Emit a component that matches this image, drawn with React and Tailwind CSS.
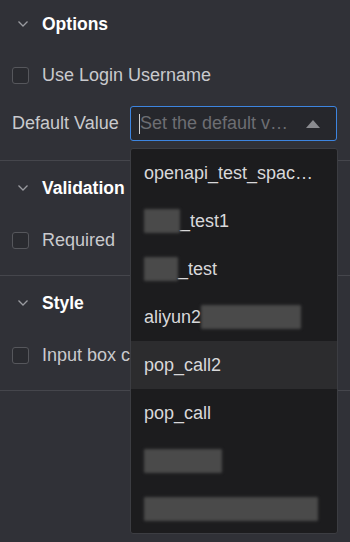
import React from 'react'

const font = { fontFamily: '"Liberation Sans", Arial, sans-serif' }

const Chevron = () => (
    <svg width="12" height="8" viewBox="0 0 12 8" className="shrink-0">
        <path d="M1.5 1.5 L6 6 L10.5 1.5" fill="none" stroke="#9a9ba0" strokeWidth="1.3" />
    </svg>
)

const Section = ({ title, children, first }) => (
    <div className={`border-b border-[#45464c] ${first ? '-mt-[3px]' : ''}`}>
        <div className="flex items-center h-[54px] pl-[17px] gap-[13px]">
            <Chevron />
            <span className="text-[17.5px] font-bold text-white">{title}</span>
        </div>
        {children}
    </div>
)

const Checkbox = ({ label, clip }) => (
    <div className="flex items-center h-[34px] pl-[12px] gap-[13px] mt-[8px]">
        <div className="w-[17px] h-[17px] rounded-[3px] border border-[#56575c] bg-[#2a2b30] shrink-0" />
        <span className={`text-[18px] text-[#c9cacd] whitespace-nowrap ${clip ? 'w-[88px] overflow-hidden' : ''}`}>{label}</span>
    </div>
)

const Blur = ({ w }) => (
    <span className={`inline-block h-[24px] ${w} bg-[#4a4a4a] blur-[1.5px] rounded-[1px]`} />
)

const items = [
    { text: 'openapi_test_spac…' },
    { pre: 'w-[36px]', text: '_test1' },
    { pre: 'w-[34px]', text: '_test' },
    { text: 'aliyun2', post: 'w-[100px]' },
    { text: 'pop_call2', hover: true },
    { text: 'pop_call' },
    { pre: 'w-[78px]', text: '' },
    { pre: 'w-[174px]', text: '' },
]

export default function App() {
    return (
        <div className="w-[350px] h-[542px] bg-[#303137] relative overflow-hidden" style={font}>
            <Section title="Options" first>
                <div className="-mt-[1px]">
                    <Checkbox label="Use Login Username" />
                </div>
                <div className="flex items-center h-[35px] pl-[12px] mt-[14px]">
                    <span className="text-[18px] text-[#c9cacd] w-[118px] whitespace-nowrap">Default Value</span>
                    <div className="flex items-center w-[207px] h-[35px] border border-[#3d85e0] rounded-[3px] bg-[#26272c] pl-[8px] pr-[16px]">
                        <span className="w-[1px] h-[20px] bg-[#d0d0d0]" />
                        <span className="text-[18px] text-[#6d6e73] flex-1 whitespace-nowrap overflow-hidden">Set the default v…</span>
                        <svg width="14" height="8" viewBox="0 0 14 8" className="shrink-0">
                            <path d="M0 8 L7 0 L14 8 Z" fill="#8a8b90" />
                        </svg>
                    </div>
                </div>
                <div className="h-[19px]" />
            </Section>
            <Section title="Validation">
                <Checkbox label="Required" />
                <div className="h-[18px]" />
            </Section>
            <Section title="Style">
                <Checkbox label="Input box color" clip />
                <div className="h-[18px]" />
            </Section>

            <div className="absolute left-[130px] top-[148px] w-[208px] bg-[#1c1c1e] border border-[#3c3d42] rounded-[3px] overflow-hidden">
                {items.map((it, i) => (
                    <div
                        key={i}
                        className={`flex items-center h-[48px] pl-[13px] text-[18px] text-[#d8d8da] whitespace-nowrap ${it.hover ? 'bg-[#2c2c2e]' : ''}`}
                    >
                        {it.pre && <Blur w={it.pre} />}
                        {it.text && <span>{it.text}</span>}
                        {it.post && <Blur w={it.post} />}
                    </div>
                ))}
            </div>
        </div>
    )
}
